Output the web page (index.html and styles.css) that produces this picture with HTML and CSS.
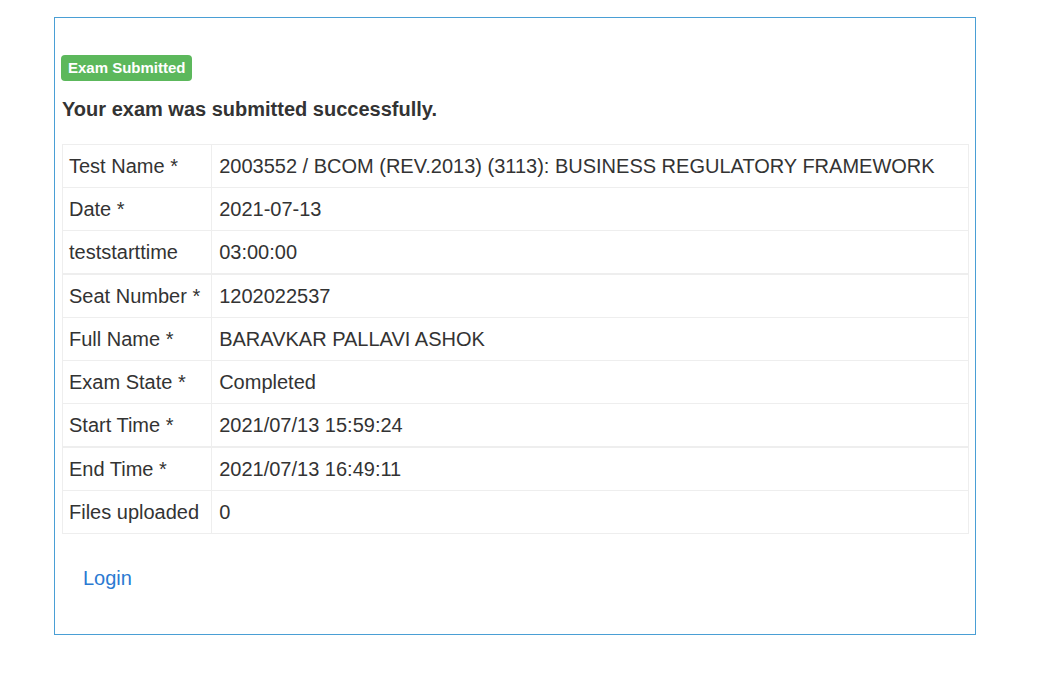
FILE: index.html
```html
<!DOCTYPE html>
<html>
<head>
<meta charset="utf-8">
<link rel="stylesheet" href="styles.css">
</head>
<body>
<div class="panel">
  <span class="badge">Exam Submitted</span>
  <h4 class="title">Your exam was submitted successfully.</h4>
  <table class="info">
    <tbody>
      <tr><td class="label">Test Name *</td><td>2003552 / BCOM (REV.2013) (3113): BUSINESS REGULATORY FRAMEWORK</td></tr>
      <tr><td class="label">Date *</td><td>2021-07-13</td></tr>
      <tr><td class="label">teststarttime</td><td>03:00:00</td></tr>
    </tbody>
    <tbody>
      <tr><td class="label">Seat Number *</td><td>1202022537</td></tr>
      <tr><td class="label">Full Name *</td><td>BARAVKAR PALLAVI ASHOK</td></tr>
      <tr><td class="label">Exam State *</td><td>Completed</td></tr>
      <tr><td class="label">Start Time *</td><td>2021/07/13 15:59:24</td></tr>
    </tbody>
    <tbody>
      <tr><td class="label">End Time *</td><td>2021/07/13 16:49:11</td></tr>
      <tr><td class="label">Files uploaded</td><td>0</td></tr>
    </tbody>
  </table>
  <div class="actions"><a class="login" href="#">Login</a></div>
</div>
</body>
</html>
```
FILE: styles.css
```css
html, body {
  margin: 0;
  padding: 0;
  background: #fff;
}
body {
  font-family: "Liberation Sans", Arial, sans-serif;
  color: #333;
  padding: 17px 0 0 54px;
}
.panel {
  box-sizing: border-box;
  width: 922px;
  height: 618px;
  border: 1px solid #4a9fd5;
  padding: 37px 6px 0 7px;
}
.badge {
  display: inline-block;
  margin-left: -1px;
  height: 26px;
  line-height: 26px;
  padding: 0 6px 0 7px;
  background: #5cb85c;
  color: #fff;
  font-weight: bold;
  font-size: 15px;
  border-radius: 4px;
}
.title {
  margin: 8px 0 15px 0;
  font-size: 20px;
  line-height: 40px;
  font-weight: bold;
  color: #333;
}
.info {
  width: 100%;
  border-collapse: collapse;
  border: 1px solid #eee;
  font-size: 20px;
}
.info td {
  border: 1px solid #eee;
  padding: 8px 7px;
  line-height: 26px;
  vertical-align: top;
  white-space: nowrap;
}
.info td.label {
  width: 1%;
  padding-left: 6px;
  padding-right: 11px;
}
.info tbody + tbody {
  border-top: 2px solid #eee;
}
.actions {
  margin-top: 25px;
}
.login {
  display: inline-block;
  padding: 6px 21px;
  font-size: 20px;
  line-height: 26px;
  color: #2a7ad2;
  text-decoration: none;
}
```
